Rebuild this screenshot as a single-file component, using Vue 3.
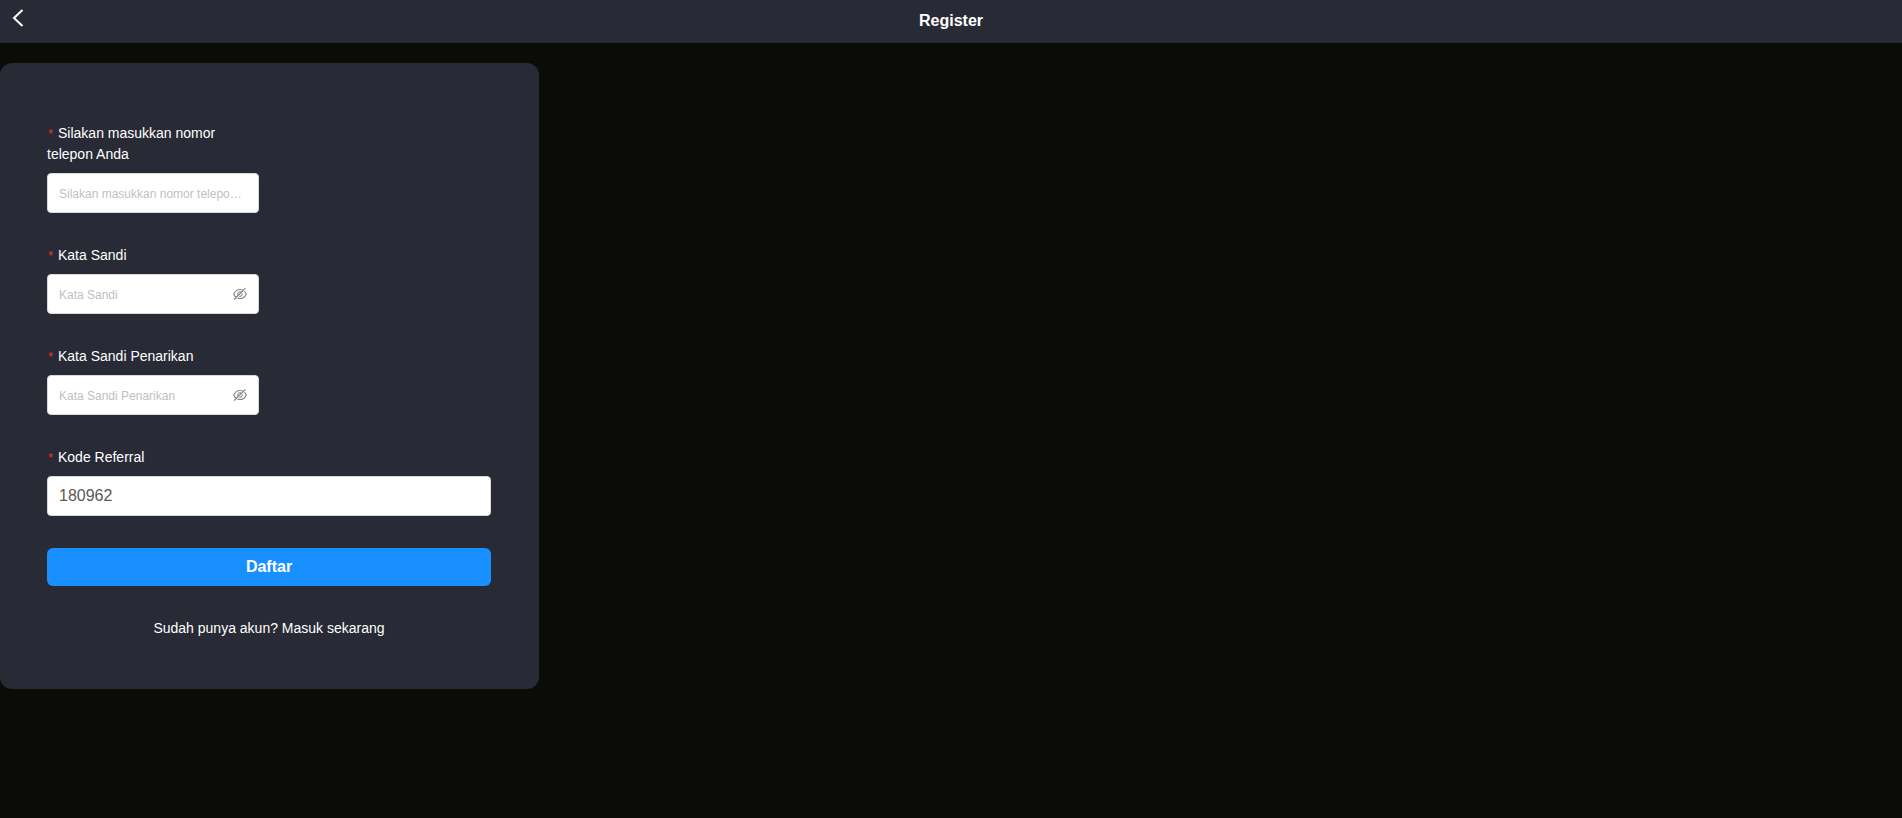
<script setup>
import { ref, reactive } from 'vue'

const fields = reactive([
  { id: 'phone', label: 'Silakan masukkan nomor telepon Anda', placeholder: 'Silakan masukkan nomor telepon Anda', value: '', secret: false, visible: true, wide: false },
  { id: 'password', label: 'Kata Sandi', placeholder: 'Kata Sandi', value: '', secret: true, visible: false, wide: false },
  { id: 'withdrawal', label: 'Kata Sandi Penarikan', placeholder: 'Kata Sandi Penarikan', value: '', secret: true, visible: false, wide: false },
  { id: 'referral', label: 'Kode Referral', placeholder: 'Kode Referral', value: '180962', secret: false, visible: true, wide: true },
])
const submitted = ref(false)
</script>

<template>
  <div class="page">
    <header class="bar">
      <button class="back" type="button" aria-label="Kembali">
        <svg viewBox="0 0 12 18" width="12" height="18" aria-hidden="true">
          <path d="M10.500 1 2 9l8.500 8" />
        </svg>
      </button>
      <h1 class="title">Register</h1>
    </header>

    <main>
      <form class="card" @submit.prevent="submitted = true">
        <div v-for="f in fields" :key="f.id" class="field" :class="{ wide: f.wide }">
          <label class="label" :for="f.id">{{ f.label }}</label>
          <div class="box">
            <input
              :id="f.id"
              v-model="f.value"
              class="input"
              :type="f.visible ? 'text' : 'password'"
              :placeholder="f.placeholder"
            />
            <button
              v-if="f.secret"
              class="eye"
              type="button"
              aria-label="Tampilkan kata sandi"
              @click="f.visible = !f.visible"
            >
              <svg viewBox="64 64 896 896" width="14" height="14" fill="currentColor" aria-hidden="true">
                <path d="M942.2 486.2Q889.47 375.11 816.7 305l-50.88 50.88C807.31 395.53 843.45 447.4 874.7 512 791.5 684.2 673.4 766 512 766q-72.67 0-133.87-22.38L323 798.75Q408 838 512 838q288.3 0 430.2-300.3a60.29 60.29 0 000-51.5zm-63.57-320.64L836 122.88a8 8 0 00-11.32 0L715.31 232.2Q624.86 186 512 186q-288.3 0-430.2 300.3a60.3 60.3 0 000 51.5q56.69 119.4 136.5 191.41L112.48 835a8 8 0 000 11.31L155.17 889a8 8 0 0011.31 0l712.15-712.12a8 8 0 000-11.32zM149.3 512C232.6 339.8 350.7 258 512 258c54.54 0 104.13 9.36 149.12 28.39l-70.3 70.3a176 176 0 00-238.13 238.13l-83.42 83.42C223.1 637.49 183.3 582.28 149.3 512zm246.7 0a112.11 112.11 0 01146.2-106.69L401.31 546.2A112 112 0 01396 512z" />
                <path d="M508 624c-3.46 0-6.87-.16-10.25-.47l-52.82 52.82a176.09 176.09 0 00227.42-227.42l-52.82 52.82c.31 3.38.47 6.79.47 10.25a111.94 111.94 0 01-112 112z" />
              </svg>
            </button>
          </div>
        </div>
        <button class="submit" type="submit">Daftar</button>
        <a class="login" href="#login">Sudah punya akun? Masuk sekarang</a>
      </form>
    </main>
  </div>
</template>

<style>
body {
  background: #0b0c07;
}
</style>

<style scoped>
.page {
  font-family: "Liberation Sans", Arial, sans-serif;
  font-size: 14px;
  line-height: 21px;
  color: #fff;
}

.bar {
  display: grid;
  grid-template-columns: 36px 1fr 36px;
  align-items: start;
  background: #282a35;
  padding-bottom: 1px;
}

.back {
  display: flex;
  align-items: center;
  height: 36px;
  padding: 0 0 0 12px;
  border: 0;
  background: none;
  cursor: pointer;
}

.back path {
  fill: none;
  stroke: #fff;
  stroke-width: 2;
}

.title {
  margin: 0;
  text-align: center;
  font-size: 16px;
  font-weight: 700;
  line-height: 42px;
}

.card {
  box-sizing: border-box;
  display: flex;
  flex-direction: column;
  gap: 32px;
  max-width: 539px;
  margin-top: 20px;
  padding: 60px 48px 50px 47px;
  border-radius: 12px;
  background: #282a35;
}

.field {
  display: flex;
  flex-direction: column;
  gap: 8px;
  max-width: 212px;
}

.field.wide {
  max-width: none;
}

.label::before {
  content: "*";
  display: inline-block;
  width: 7px;
  margin-right: 4px;
  color: #ff2a2d;
  font-family: "Liberation Mono", monospace;
  font-size: 12px;
  line-height: 12px;
}

.box {
  box-sizing: border-box;
  display: flex;
  align-items: center;
  height: 40px;
  padding: 0 11px;
  border: 1px solid #d9d9d9;
  border-radius: 4px;
  background: #fff;
}

.input {
  flex: 1;
  min-width: 0;
  padding: 0;
  border: 0;
  outline: 0;
  background: none;
  color: #595959;
  font: 16px "Liberation Sans", Arial, sans-serif;
  text-overflow: ellipsis;
}

.input::placeholder {
  color: #bfbfbf;
  font-size: 12px;
  text-overflow: ellipsis;
}

.eye {
  display: flex;
  padding: 0;
  border: 0;
  background: none;
  color: #858585;
  cursor: pointer;
}

.submit {
  height: 38px;
  padding: 0;
  border: 0;
  border-radius: 6px;
  background: #1890ff;
  color: #fff;
  font: 700 16px "Liberation Sans", Arial, sans-serif;
  cursor: pointer;
}

.login {
  align-self: center;
  color: #fff;
  text-decoration: none;
}
</style>
